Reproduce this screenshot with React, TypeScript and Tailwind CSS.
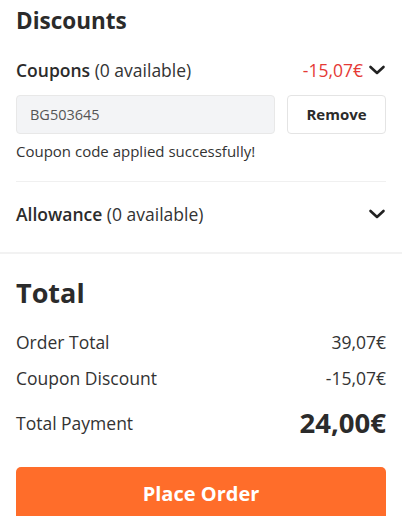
import React from "react";

function Chevron() {
  return (
    <svg width="18" height="12" viewBox="0 0 18 12" fill="none" stroke="#222" strokeWidth="2.6" strokeLinecap="round" strokeLinejoin="round">
      <path d="M2.5 3l6.5 6 6.5-6" />
    </svg>
  );
}

export default function App() {
  return (
    <div className="w-[402px] h-[516px] overflow-hidden bg-white text-[#333]" style={{ fontFamily: '"Open Sans", sans-serif' }}>
      <div className="px-4 pt-[4px]">
        <h2 className="text-[22.5px] font-bold leading-[34px] text-[#2b2b2b]">Discounts</h2>
        <div className="mt-[19px] flex items-center justify-between h-[26px]">
          <div className="text-[17.5px]"><span className="font-semibold text-[#2b2b2b]">Coupons</span> (0 available)</div>
          <div className="flex items-center gap-[5px]">
            <span className="text-[17.5px] text-[#e53935]">-15,07€</span>
            <Chevron />
          </div>
        </div>
        <div className="mt-[12px] flex gap-3">
          <div className="flex-1 h-[39px] rounded bg-[#f3f4f6] border border-[#e8e8e8] flex items-center px-[13px] text-[14.5px] text-[#555]">BG503645</div>
          <button className="w-[99px] h-[39px] rounded border border-[#e4e4e4] bg-white text-[15px] font-bold text-[#2b2b2b]">Remove</button>
        </div>
        <p className="mt-[7px] text-[15px] leading-[20px] text-[#333]">Coupon code applied successfully!</p>
        <div className="mt-[20px] border-t border-[#f0f0f0]" />
        <div className="flex items-center justify-between h-[64px]">
          <div className="text-[17.5px]"><span className="font-semibold text-[#2b2b2b]">Allowance</span> (0 available)</div>
          <Chevron />
        </div>
      </div>
      <div className="mt-[6px] h-[2px] bg-[#f2f2f2]" />
      <div className="px-4">
        <h2 className="mt-[21px] text-[27px] font-bold leading-[36px] text-[#2b2b2b]">Total</h2>
        <div className="mt-[19px] flex justify-between text-[17.5px] leading-[24px]">
          <span>Order Total</span><span>39,07€</span>
        </div>
        <div className="mt-[12px] flex justify-between text-[17.5px] leading-[24px]">
          <span>Coupon Discount</span><span>-15,07€</span>
        </div>
        <div className="mt-[14px] flex items-center justify-between h-[38px]">
          <span className="text-[17.5px]">Total Payment</span>
          <span className="text-[27.5px] font-bold text-[#2b2b2b]">24,00€</span>
        </div>
        <button className="mt-[25px] w-full h-[54px] rounded-[5px] bg-[#ff6d2a] text-white text-[20px] font-bold leading-[28px]">Place Order</button>
      </div>
    </div>
  );
}
